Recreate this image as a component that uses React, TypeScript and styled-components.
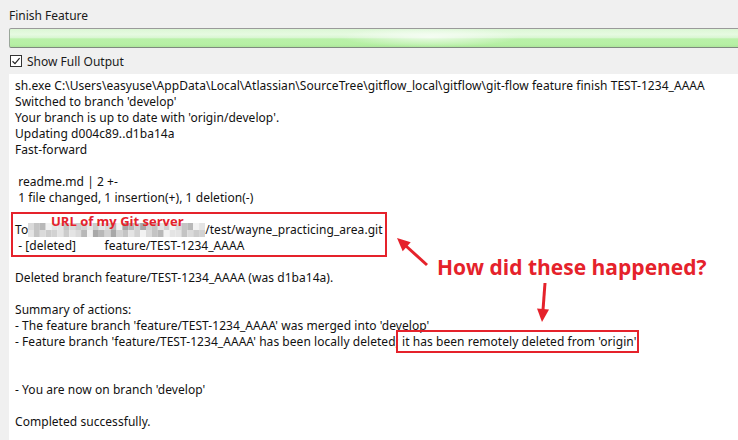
import React from "react"
import styled, { createGlobalStyle } from "styled-components"

const GlobalStyle = createGlobalStyle`
    html, body {
        margin: 0;
        padding: 0;
        background: #f0f0f0;
    }
    body {
        font-family: "Noto Sans", "Open Sans", sans-serif;
        color: #111;
    }
`

const RED = "#e5222b"

const Window = styled.div`
    position: relative;
    width: 738px;
    height: 440px;
    overflow: hidden;
    display: flex;
    flex-direction: column;
    background: #f0f0f0;
`

const Title = styled.div`
    height: 28px;
    padding: 6px 0 0 9px;
    box-sizing: border-box;
    font-size: 12px;
    line-height: 20px;
    color: #1a1a1a;
`

const Progress = styled.div`
    height: 20px;
    margin-left: 9px;
    box-sizing: border-box;
    border-top: 1px solid #9a9a9a;
    border-bottom: 1px solid #7e8a7e;
    border-left: 1px solid #9aa69a;
    border-radius: 2px 0 0 2px;
    background:
        radial-gradient(ellipse 90px 10px at 420px 45%, rgba(255, 255, 255, 0.7), rgba(255, 255, 255, 0) 100%),
        linear-gradient(
            to bottom,
            #dcf7d5 0%,
            #e6fae1 30%,
            #d9f6d2 48%,
            #baf1a9 55%,
            #b6f0a4 85%,
            #ade69b 100%
        );
`

const CheckRow = styled.label`
    display: flex;
    align-items: center;
    gap: 5px;
    height: 26px;
    padding-left: 10px;
    font-size: 12px;
    color: #1a1a1a;
`

const CheckBox = styled.span`
    display: inline-flex;
    align-items: center;
    justify-content: center;
    width: 12px;
    height: 12px;
    box-sizing: border-box;
    border: 1px solid #333;
    background: #fff;
`

const Output = styled.div`
    flex: 1;
    margin-left: 9px;
    padding: 4px 0 0 6px;
    background: #fff;
    font-size: 12px;
    line-height: 16px;
    letter-spacing: 0.05px;
    color: #111;
`

const Line = styled.div`
    height: 16px;
    white-space: pre;
`

const Mosaic = styled.svg`
    display: inline-block;
    vertical-align: -3px;
`

const Remote = styled.span`
    outline: 2px solid ${RED};
    outline-offset: 1px;
`

const Overlay = styled.div`
    position: absolute;
    inset: 0;
    pointer-events: none;
`

const Frame = styled.div`
    position: absolute;
    left: 11px;
    top: 212px;
    width: 376px;
    height: 45px;
    box-sizing: border-box;
    border: 2px solid ${RED};
`

const Note = styled.div<{ $size: number }>`
    position: absolute;
    font-family: "Open Sans", "Noto Sans", sans-serif;
    font-weight: 700;
    font-size: ${p => p.$size}px;
    line-height: 1;
    color: ${RED};
    white-space: nowrap;
`

const grays = ["#e4e4e4", "#d2d2d2", "#c4c4c4", "#eeeeee", "#b8b8b8", "#dadada", "#cccccc", "#f2f2f2", "#a8a8a8"]

function BlurredUrl() {
    const cells: React.ReactNode[] = []
    let seed = 7
    for (let row = 0; row < 2; row++) {
        for (let col = 0; col < 30; col++) {
            seed = (seed * 37 + 11) % 101
            cells.push(
                <rect key={row + "-" + col} x={col * 6} y={row * 7} width={6} height={7} fill={grays[seed % grays.length]} />,
            )
        }
    }
    return (
        <Mosaic width={177} height={14} viewBox="0 0 180 14" preserveAspectRatio="none">
            {cells}
        </Mosaic>
    )
}

const lines: React.ReactNode[] = [
    "sh.exe C:\\Users\\easyuse\\AppData\\Local\\Atlassian\\SourceTree\\gitflow_local\\gitflow\\git-flow feature finish TEST-1234_AAAA",
    "Switched to branch 'develop'",
    "Your branch is up to date with 'origin/develop'.",
    "Updating d004c89..d1ba14a",
    "Fast-forward",
    "",
    " readme.md | 2 +-",
    " 1 file changed, 1 insertion(+), 1 deletion(-)",
    "",
    <>
        To
        <BlurredUrl />
        /test/wayne_practicing_area.git
    </>,
    " - [deleted]         feature/TEST-1234_AAAA",
    "",
    "Deleted branch feature/TEST-1234_AAAA (was d1ba14a).",
    "",
    "Summary of actions:",
    "- The feature branch 'feature/TEST-1234_AAAA' was merged into 'develop'",
    <>
        - Feature branch 'feature/TEST-1234_AAAA' has been locally deleted;
        <Remote> it has been remotely deleted from 'origin'</Remote>
    </>,
    "",
    "",
    "- You are now on branch 'develop'",
    "",
    "Completed successfully.",
]

export default function App() {
    return (
        <Window>
            <GlobalStyle />
            <Title>Finish Feature</Title>
            <Progress />
            <CheckRow>
                <CheckBox>
                    <svg width="10" height="10" viewBox="0 0 10 10">
                        <path d="M1.5 5.2 L4 7.6 L8.6 2.2" fill="none" stroke="#222" strokeWidth="1.2" />
                    </svg>
                </CheckBox>
                Show Full Output
            </CheckRow>
            <Output>
                {lines.map((l, i) => (
                    <Line key={i}>{l}</Line>
                ))}
            </Output>
            <Overlay>
                <Frame />
                <Note $size={13} style={{ left: 51, top: 215 }}>
                    URL of my Git server
                </Note>
                <Note $size={21} style={{ left: 437, top: 257 }}>
                    How did these happened?
                </Note>
                <svg width="738" height="440" viewBox="0 0 738 440" style={{ position: "absolute", left: 0, top: 0 }}>
                    <g stroke={RED} strokeWidth="3" fill={RED}>
                        <line x1="427" y1="265" x2="406" y2="246" />
                        <polygon points="397,238 410.7,242.2 402.7,251.2" stroke="none" />
                        <line x1="545" y1="283" x2="543" y2="310" />
                        <polygon points="542,322 537,308.5 549,309.5" stroke="none" />
                    </g>
                </svg>
            </Overlay>
        </Window>
    )
}
